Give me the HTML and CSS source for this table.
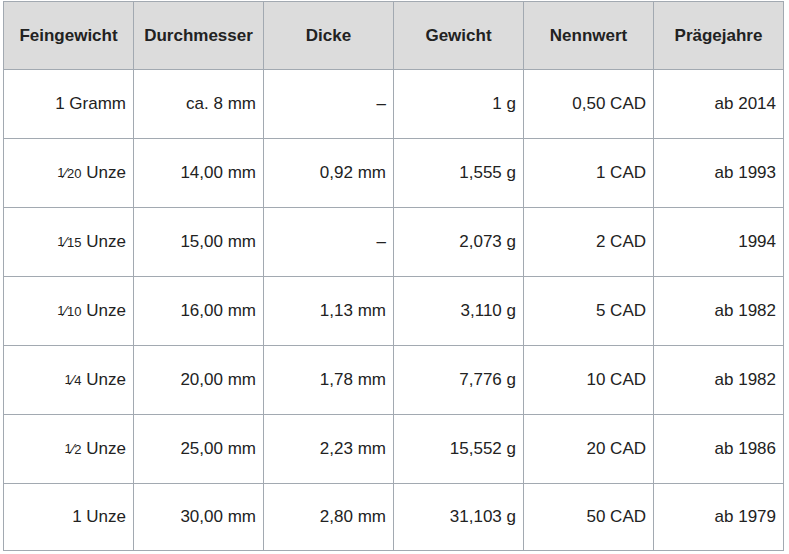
FILE: index.html
```html
<!DOCTYPE html>
<html lang="de">
<head>
<meta charset="utf-8">
<link rel="stylesheet" href="styles.css">
</head>
<body>
<table class="coins">
  <thead>
    <tr>
      <th>Feingewicht</th>
      <th>Durchmesser</th>
      <th>Dicke</th>
      <th>Gewicht</th>
      <th>Nennwert</th>
      <th>Prägejahre</th>
    </tr>
  </thead>
  <tbody>
    <tr><td>1 Gramm</td><td>ca. 8 mm</td><td>–</td><td>1 g</td><td>0,50 CAD</td><td>ab 2014</td></tr>
    <tr><td><span class="frac"><span class="num">1</span><span class="sl">⁄</span><span class="den">20</span></span> Unze</td><td>14,00 mm</td><td>0,92 mm</td><td>1,555 g</td><td>1 CAD</td><td>ab 1993</td></tr>
    <tr><td><span class="frac"><span class="num">1</span><span class="sl">⁄</span><span class="den">15</span></span> Unze</td><td>15,00 mm</td><td>–</td><td>2,073 g</td><td>2 CAD</td><td>1994</td></tr>
    <tr><td><span class="frac"><span class="num">1</span><span class="sl">⁄</span><span class="den">10</span></span> Unze</td><td>16,00 mm</td><td>1,13 mm</td><td>3,110 g</td><td>5 CAD</td><td>ab 1982</td></tr>
    <tr><td><span class="frac"><span class="num">1</span><span class="sl">⁄</span><span class="den">4</span></span> Unze</td><td>20,00 mm</td><td>1,78 mm</td><td>7,776 g</td><td>10 CAD</td><td>ab 1982</td></tr>
    <tr><td><span class="frac"><span class="num">1</span><span class="sl">⁄</span><span class="den">2</span></span> Unze</td><td>25,00 mm</td><td>2,23 mm</td><td>15,552 g</td><td>20 CAD</td><td>ab 1986</td></tr>
    <tr class="last"><td>1 Unze</td><td>30,00 mm</td><td>2,80 mm</td><td>31,103 g</td><td>50 CAD</td><td>ab 1979</td></tr>
  </tbody>
</table>
</body>
</html>
```
FILE: styles.css
```css
html, body {
  margin: 0;
  background: #ffffff;
}
body {
  padding: 1px 0 0 3px;
  font-family: "Liberation Sans", Arial, sans-serif;
  font-size: 17px;
  color: #222222;
}
.coins {
  border-collapse: collapse;
  table-layout: fixed;
  width: 781px;
  border: 1px solid #a2a9b1;
}
.coins th,
.coins td {
  border: 1px solid #a2a9b1;
  width: 130px;
  padding: 0 7px 0 7px;
  box-sizing: border-box;
}
.coins th {
  background: #dcdcdc;
  font-weight: bold;
  text-align: center;
  height: 68px;
}
.coins td {
  text-align: right;
  height: 69px;
}
.coins .last td {
  height: 67px;
}
.frac {
  font-size: 13px;
}
.frac .num {
  position: relative;
  top: -1px;
}
.frac .sl {
  font-size: 15px;
}
```
